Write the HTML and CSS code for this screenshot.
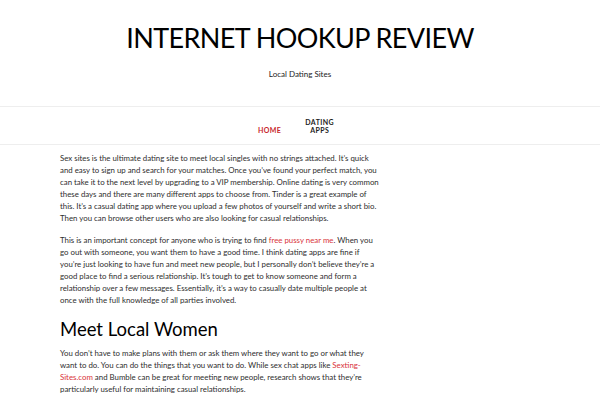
FILE: index.html
```html
<!DOCTYPE html>
<html>
<head>
<meta charset="utf-8">
<link rel="stylesheet" href="styles.css">
</head>
<body>
<header class="site-header">
  <h1 class="site-title">INTERNET HOOKUP REVIEW</h1>
  <p class="site-desc">Local Dating Sites</p>
</header>
<nav class="main-nav">
  <ul class="menu">
    <li class="menu-item current"><a href="#">Home</a></li>
    <li class="menu-item"><a href="#">Dating<br>Apps</a></li>
  </ul>
</nav>
<main class="content">
  <p>Sex sites is the ultimate dating site to meet local singles with no strings attached. It’s quick and easy to sign up and search for your matches. Once you’ve found your perfect match, you can take it to the next level by upgrading to a VIP membership. Online dating is very common these days and there are many different apps to choose from. Tinder is a great example of this. It’s a casual dating app where you upload a few photos of yourself and write a short bio. Then you can browse other users who are also looking for casual relationships.</p>
  <p>This is an important concept for anyone who is trying to find <a href="#">free pussy near me</a>. When you go out with someone, you want them to have a good time. I think dating apps are fine if you’re just looking to have fun and meet new people, but I personally don’t believe they’re a good place to find a serious relationship. It’s tough to get to know someone and form a relationship over a few messages. Essentially, it’s a way to casually date multiple people at once with the full knowledge of all parties involved.</p>
  <h2>Meet Local Women</h2>
  <p>You don’t have to make plans with them or ask them where they want to go or what they want to do. You can do the things that you want to do. While sex chat apps like <a href="#">Sexting-Sites.com</a> and Bumble can be great for meeting new people, research shows that they’re particularly useful for maintaining casual relationships.</p>
</main>
</body>
</html>
```
FILE: styles.css
```css
html, body {
  margin: 0;
  padding: 0;
  background: #fff;
}
body {
  font-family: Lato, "Open Sans", sans-serif;
  color: #2e2e2e;
}
.site-header {
  text-align: center;
  padding: 18px 0 0;
  height: 107px;
  box-sizing: border-box;
  border-bottom: 1px solid #eee;
}
.site-title {
  margin: 0;
  font-size: 27px;
  font-weight: 400;
  letter-spacing: -0.6px;
  line-height: 40px;
  color: #000;
}
.site-desc {
  margin: 10px 0 0;
  font-size: 8px;
  line-height: 12px;
  color: #222;
}
.main-nav {
  border-bottom: 1px solid #eee;
  height: 37px;
  display: flex;
  justify-content: center;
  align-items: center;
}
.menu {
  list-style: none;
  margin: 0 0 0 -8px;
  padding: 0;
  display: flex;
  align-items: flex-end;
  gap: 24px;
}
.menu-item a {
  display: block;
  text-align: center;
  text-decoration: none;
  text-transform: uppercase;
  font-size: 7px;
  font-weight: 700;
  letter-spacing: 0.4px;
  line-height: 8px;
  color: #222;
}
.menu-item.current a {
  color: #c8262c;
}
.content {
  width: 319px;
  margin: 0 0 0 60px;
  padding-top: 7px;
  font-size: 7.85px;
  line-height: 12px;
}
.content p {
  margin: 0 0 10px;
}
.content a {
  color: #d9333a;
  text-decoration: none;
}
.content h2 {
  margin: 12px 0 7px;
  font-size: 18.5px;
  font-weight: 400;
  line-height: 22px;
  color: #000;
}
```
